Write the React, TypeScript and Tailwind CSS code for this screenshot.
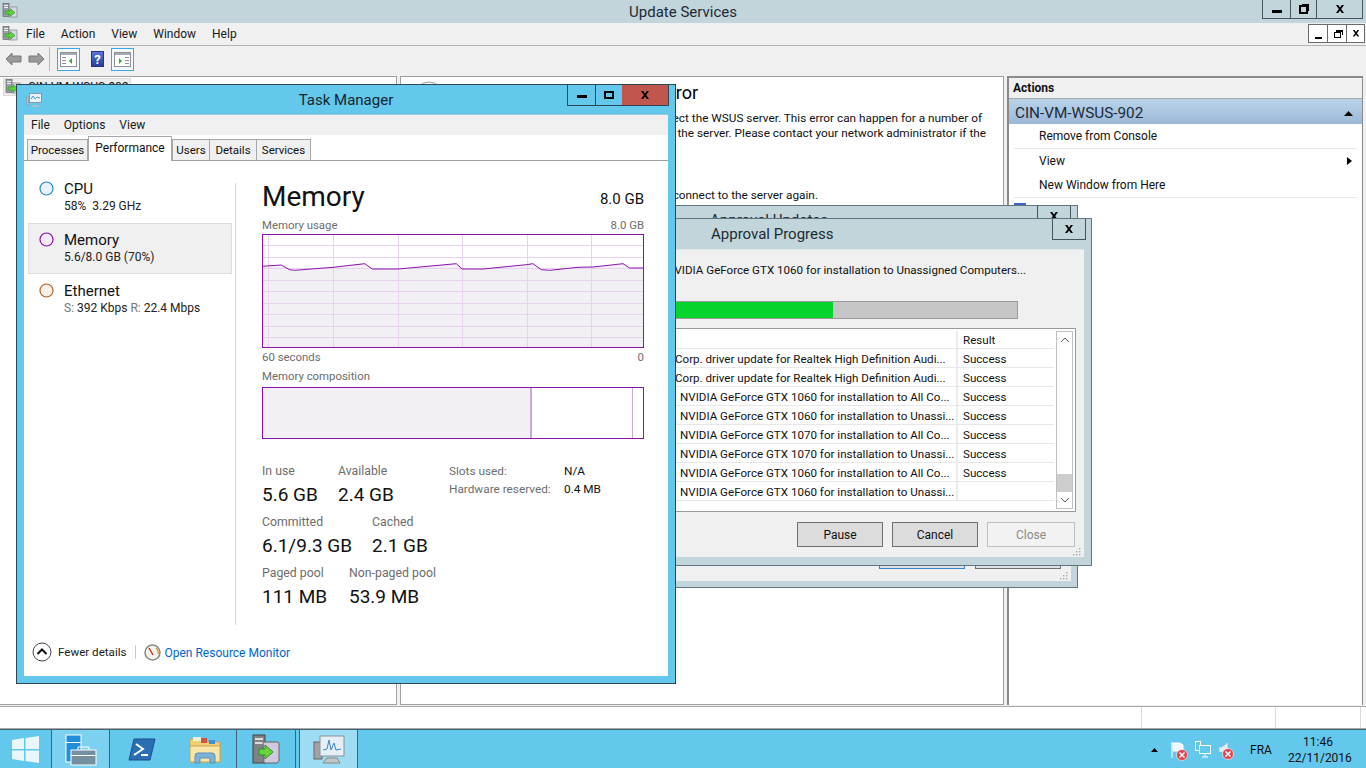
import React from "react";

const ServerIcon = ({ size = 16 }: { size?: number }) => (
  <svg width={size} height={size} viewBox="0 0 16 16">
    <rect x="1" y="0.5" width="6" height="13" fill="#9aa0a8" stroke="#555" strokeWidth="0.6" />
    <rect x="2" y="2" width="4" height="1" fill="#eee" />
    <rect x="2" y="4" width="4" height="1" fill="#eee" />
    <rect x="7" y="4" width="8" height="10" fill="#d8d8e4" stroke="#777" strokeWidth="0.6" />
    <path d="M3 8h5V5.5L13 9.5 8 13.5V11H3z" fill="#5fd03f" stroke="#2d8f22" strokeWidth="0.6" />
  </svg>
);

const MiniMonitor = () => (
  <svg width="16" height="15" viewBox="0 0 16 15">
    <rect x="0.5" y="4" width="2" height="8" fill="#b8c0b0" stroke="#88a" strokeWidth="0.4" />
    <rect x="3.5" y="0.5" width="12" height="9" fill="#e8f2fa" stroke="#8a9aa5" />
    <path d="M5 6l2-3 2 3 2-2 3 1" stroke="#3f88c8" strokeWidth="0.9" fill="none" />
    <path d="M7 12h5l1 2H6z" fill="#b4bcc0" />
  </svg>
);

const Arrow = ({ flip }: { flip?: boolean }) => (
  <svg width="17" height="14" viewBox="0 0 17 14" className={flip ? "-scale-x-100" : ""}>
    <path d="M1 7l6-6v3h9v6H7v3z" fill="#9a9a9a" stroke="#7a7a7a" />
  </svg>
);

const PaneBtn = ({ right }: { right?: boolean }) => (
  <div className="w-[23px] h-[23px] border border-[#3aa7e6] flex items-center justify-center bg-[#f4f8fb]">
    <svg width="17" height="15" viewBox="0 0 17 15">
      <rect x="0.5" y="0.5" width="16" height="14" fill="#fff" stroke="#8d9196" />
      <rect x="1" y="1" width="15" height="2" fill="#a6abb0" />
      {right ? (
        <>
          <rect x="11" y="5" width="4" height="1" fill="#8d9196" />
          <rect x="11" y="8" width="4" height="1" fill="#8d9196" />
          <rect x="11" y="11" width="4" height="1" fill="#8d9196" />
          <path d="M5 6l3 3-3 3z" fill="#2fae3c" />
        </>
      ) : (
        <>
          <rect x="2" y="5" width="4" height="1" fill="#8d9196" />
          <rect x="2" y="8" width="4" height="1" fill="#8d9196" />
          <rect x="2" y="11" width="4" height="1" fill="#8d9196" />
          <path d="M12 6l-3 3 3 3z" fill="#2fae3c" />
        </>
      )}
    </svg>
  </div>
);

const HelpIcon = () => (
  <div className="w-[13px] h-[16px] bg-gradient-to-b from-[#5c74d8] to-[#2c3f9c] border border-[#27348a] flex items-center justify-center text-white font-bold text-[13px] leading-none">
    ?
  </div>
);

const XGlyph = ({ s = 10 }: { s?: number }) => (
  <svg width={s} height={s * 0.8} viewBox="0 0 10 8">
    <path d="M1 0h2.2L5 2.4 6.8 0H9L6.2 4 9 8H6.8L5 5.6 3.2 8H1l2.8-4z" fill="#000" />
  </svg>
);

const NavItem = ({ color, title, sub, active, fill }: { color: string; title: string; sub: React.ReactNode; active?: boolean; fill: string }) => (
  <div className={`h-[51px] flex border pl-[10px] pt-[6px] ${active ? "bg-[#f0f0f0] border-[#dcdcdc]" : "border-transparent"}`}>
    <svg width="15" height="15" viewBox="0 0 15 15" className="mt-[2px] shrink-0">
      <circle cx="7.5" cy="7.5" r="6.5" fill={fill} stroke={color} strokeWidth="1.2" />
    </svg>
    <div className="ml-[10px]">
      <div className="text-[15px] leading-[20px] text-[#111]">{title}</div>
      <div className="text-[12px] leading-[15px] text-[#222] whitespace-nowrap">{sub}</div>
    </div>
  </div>
);

const Stat = ({ label, value, w }: { label: string; value: string; w: string }) => (
  <div className={w}>
    <div className="text-[12.3px] leading-[16px] text-[#6d6d6d] whitespace-nowrap">{label}</div>
    <div className="mt-[2px] text-[19px] leading-[27px] text-[#111] whitespace-nowrap">{value}</div>
  </div>
);

const gx = [6, 71, 136, 200, 265, 329];
const gy = [11, 23, 34, 46, 57, 69, 80, 92, 103];
const pts: [number, number][] = [[37,170],[95,166],[120,180],[135,182],[250,173],[345,162],[368,178],[445,178],[620,162],[637,178],[700,178],[830,165],[850,162],[875,180],[900,182],[985,173],[1030,172],[1120,162],[1140,175],[1180,175]];
const linePts = pts.map(([x, y]) => `${((x - 37) / 3).toFixed(1)},${((y - 73) / 3).toFixed(1)}`).join(" ");

const MemGraph = () => (
  <svg width="382" height="114" viewBox="0 0 382 114" className="block">
    <rect x="0" y="0" width="382" height="114" fill="#fff" />
    <polygon points={`0,113 ${linePts} 382,113`} fill="#f2f0f4" />
    {gx.map((x) => (
      <line key={x} x1={x + 0.5} x2={x + 0.5} y1="0" y2="114" stroke="#e8d3ef" />
    ))}
    {gy.map((y) => (
      <line key={y} y1={y + 0.5} y2={y + 0.5} x1="0" x2="382" stroke="#e8d3ef" />
    ))}
    <polyline points={linePts} fill="none" stroke="#8b12ae" strokeWidth="1" />
    <rect x="0.5" y="0.5" width="381" height="113" fill="none" stroke="#8b12ae" />
  </svg>
);

const rows: [string, string, string][] = [
  ["Corp. driver update for Realtek High Definition Audi...", "Success", "ml-[0px]"],
  ["Corp. driver update for Realtek High Definition Audi...", "Success", "ml-[0px]"],
  ["NVIDIA GeForce GTX 1060 for installation to All Co...", "Success", "ml-[5px]"],
  ["NVIDIA GeForce GTX 1060 for installation to Unassi...", "Success", "ml-[5px]"],
  ["NVIDIA GeForce GTX 1070 for installation to All Co...", "Success", "ml-[5px]"],
  ["NVIDIA GeForce GTX 1070 for installation to Unassi...", "Success", "ml-[5px]"],
  ["NVIDIA GeForce GTX 1060 for installation to All Co...", "Success", "ml-[5px]"],
  ["NVIDIA GeForce GTX 1060 for installation to Unassi...", "", "ml-[5px]"],
];

const Grip = () => (
  <svg width="10" height="10" viewBox="0 0 10 10" className="absolute right-[3px] bottom-[1px]">
    {[[8, 2], [8, 5], [8, 8], [5, 5], [5, 8], [2, 8]].map(([x, y]) => (
      <rect key={`${x}-${y}`} x={x} y={y} width="1.4" height="1.4" fill="#a8a8a8" />
    ))}
  </svg>
);

const TaskBtn = ({ children, w, cls = "" }: { children: React.ReactNode; w: string; cls?: string }) => (
  <div className={`${w} h-full flex items-center justify-center border-r border-[#3f6476] ${cls}`}>{children}</div>
);

const RedX = () => (
  <svg width="12" height="12" viewBox="0 0 12 12" className="absolute right-[-3px] bottom-[-3px]">
    <circle cx="6" cy="6" r="5.500" fill="#e2444d" stroke="#fff" strokeWidth="0.6" />
    <path d="M3.500 3.500l5 5M8.500 3.500l-5 5" stroke="#fff" strokeWidth="1.500" />
  </svg>
);

export default function App() {
  return (
    <div className="relative w-[1366px] h-[768px] overflow-hidden flex flex-col bg-[#f0f0f0] font-['Roboto',sans-serif] text-[12px] text-[#111]">
      {/* title */}
      <div className="relative h-[23px] shrink-0 bg-[#c2d5db] flex items-center justify-center pt-[1px] text-[15px] text-[#1c2b33]">
        <div className="absolute left-[2px] top-[3px]"><ServerIcon /></div>
        Update Services
        <div className="absolute right-[3px] top-0 h-[19px] flex border border-t-0 border-[#45555d]">
          <div className="w-[28px] flex items-center justify-center border-r border-[#45555d]"><div className="w-[10px] h-[3px] mt-[4px] bg-black" /></div>
          <div className="w-[26px] flex items-center justify-center border-r border-[#45555d]">
            <div className="relative w-[9px] h-[9px] border-2 border-black"><div className="absolute -top-[3px] -right-[3px] w-[7px] h-[7px] border-t border-r border-black" /></div>
          </div>
          <div className="w-[45px] flex items-center justify-center"><XGlyph /></div>
        </div>
      </div>
      {/* menu */}
      <div className="relative h-[23px] shrink-0 flex items-center border-b border-[#b4b4b4] bg-[#f0f0f0]">
        <div className="ml-[2px] mr-[8px]"><ServerIcon /></div>
        <div className="flex gap-[16px] text-[#1a1a1a]">
          <span>File</span><span>Action</span><span>View</span><span>Window</span><span>Help</span>
        </div>
        <div className="absolute right-[1px] top-[1px] h-[19px] w-[57px] flex border border-[#6b6b6b] bg-white">
          <div className="w-[19px] flex items-end justify-center pb-[3px] border-r border-[#6b6b6b]"><div className="w-[7px] h-[2px] bg-black" /></div>
          <div className="w-[19px] flex items-center justify-center border-r border-[#6b6b6b]">
            <div className="relative w-[7px] h-[6px] mt-[2px] border border-black"><div className="absolute -top-[3px] -right-[3px] w-[7px] h-[5px] border-t-2 border-r border-black" /></div>
          </div>
          <div className="flex-1 flex items-center justify-center"><XGlyph s={8} /></div>
        </div>
      </div>
      {/* toolbar */}
      <div className="h-[30px] shrink-0 flex items-center pl-[5px] pb-[4px]">
        <Arrow /><div className="w-[6px]" /><Arrow flip />
        <div className="w-px h-[24px] bg-[#b8b8b8] ml-[4px] mr-[7px]" />
        <PaneBtn />
        <div className="ml-[11px] mr-[7px]"><HelpIcon /></div>
        <PaneBtn right />
      </div>
      {/* main */}
      <div className="h-[630px] shrink-0 flex">
        <div className="w-[397px] h-[629px] bg-white border border-l-0 border-[#a0a0a0] pl-[3px] pt-[1px]">
          <div className="w-[128px] h-[18px] bg-[#ececec] border border-[#dcdcdc] flex items-center gap-[7px] pl-[1px] whitespace-nowrap">
            <ServerIcon />CIN-VM-WSUS-902
          </div>
        </div>
        <div className="w-[3px]" />
        <div className="w-[604px] h-[629px] bg-white border border-[#a0a0a0] overflow-hidden whitespace-nowrap">
          <div className="pt-[4px] flex items-start justify-between w-[297px] pl-[12px]">
            <svg width="32" height="32" viewBox="0 0 32 32"><circle cx="16" cy="16" r="15" fill="#fff" stroke="#999" /></svg>
            <span className="text-[18px] leading-[24px] text-black">Error</span>
          </div>
          <div className="-mt-[2px] leading-[15px] text-[11.8px]">
            <div className="w-[581px] text-right">The console cannot connect the WSUS server. This error can happen for a number of</div>
            <div className="w-[585px] text-right">reasons. Check connectivity to the server. Please contact your network administrator if the</div>
            <div className="mt-[47px] w-[417px] text-right">After fixing the problem, try to connect to the server again.</div>
          </div>
        </div>
        <div className="w-[3px]" />
        <div className="w-[356px] h-[629px] bg-white border-t-2 border-l-2 border-r border-[#8a8a8a] flex flex-col">
          <div className="h-[21px] bg-[#f0f0f0] border-b border-[#a8a8a8] pl-[4px] font-bold flex items-center">Actions</div>
          <div className="h-[25px] pt-[3px] bg-gradient-to-b from-[#bad3ea] to-[#9cb8d6] flex items-center justify-between pl-[6px] pr-[9px] text-[15.3px] text-[#1c2b3a]">
            CIN-VM-WSUS-902
            <svg width="9" height="5" viewBox="0 0 9 5"><path d="M0 5l4.5-5L9 5z" fill="#000" /></svg>
          </div>
          <div className="pl-[30px] h-[24px] flex items-center">Remove from Console</div>
          <div className="mx-[5px] h-px bg-[#e8e8e8]" />
          <div className="pl-[30px] pr-[10px] h-[24px] flex items-center justify-between">
            View
            <svg width="5" height="8" viewBox="0 0 5 8"><path d="M0 0l5 4-5 4z" fill="#000" /></svg>
          </div>
          <div className="pl-[30px] h-[24px] flex items-center">New Window from Here</div>
          <div className="mx-[5px] h-px bg-[#e8e8e8]" />
          <div className="ml-[5px] mt-[5px] w-[12px] h-[12px] bg-[#3e62c8]" />
        </div>
      </div>
      {/* status */}
      <div className="h-[23px] shrink-0 bg-white border-b border-t border-[#a8a8a8] flex justify-end pr-[5px]">
        <div className="w-[134px] border-l border-[#dcdcdc]" />
        <div className="w-[86px] border-l border-r border-[#dcdcdc]" />
      </div>
      {/* taskbar */}
      <div className="h-[40px] shrink-0 bg-[#63c8eb] border-t border-[#3f6476] flex items-stretch">
        <TaskBtn w="w-[52px]">
          <svg width="28" height="27" viewBox="0 0 28 27"><path d="M0 4l12-2v11H0zM13.500 2L27 0v13H13.500zM0 14.500h12V25L0 23zM13.500 14.500H27V27l-13.500-2z" fill="#e9f7fc" /></svg>
        </TaskBtn>
        <TaskBtn w="w-[58px]" cls="bg-[#7bd1ef]">
          <svg width="32" height="32" viewBox="0 0 32 32">
            <rect x="1" y="1" width="15" height="27" fill="#1f8fdc" stroke="#fff" />
            <rect x="1" y="8" width="15" height="1" fill="#fff" />
            <rect x="6" y="16" width="25" height="15" fill="#72909f" stroke="#fff" />
            <path d="M13 16v-3h11v3" fill="none" stroke="#fff" />
            <rect x="6" y="21" width="25" height="1" fill="#fff" />
          </svg>
        </TaskBtn>
        <div className="w-[64px] flex items-center justify-center">
          <svg width="28" height="24" viewBox="0 0 28 24">
            <path d="M6 1h21l-5 21H1z" fill="#2a6fb3" stroke="#1e4f8a" />
            <path d="M8 6l7 5-9 6" fill="none" stroke="#fff" strokeWidth="2" />
            <rect x="13" y="16" width="7" height="2" fill="#fff" />
          </svg>
        </div>
        <TaskBtn w="w-[63px]">
          <svg width="32" height="28" viewBox="0 0 32 28">
            <path d="M1 3h13l2 3h15v20H1z" fill="#f1cf72" stroke="#c9a552" />
            <rect x="4" y="1" width="8" height="4" fill="#e7f2d8" />
            <rect x="12" y="2" width="6" height="5" fill="#d5513f" />
            <rect x="20" y="4" width="6" height="4" fill="#3f8fd5" />
            <path d="M1 10h30v16H1z" fill="#f8e6a8" stroke="#c9a552" />
            <path d="M6 27v-7q0-3 3-3h14q3 0 3 3v7h-5v-5H11v5z" fill="#7fb2d8" stroke="#5c8fb8" />
          </svg>
        </TaskBtn>
        <TaskBtn w="w-[59px]">
          <svg width="30" height="31" viewBox="0 0 30 31">
            <rect x="2" y="1" width="12" height="28" fill="#7f8386" stroke="#444" />
            <rect x="4" y="4" width="8" height="2" fill="#ddd" />
            <rect x="4" y="8" width="8" height="2" fill="#ddd" />
            <path d="M12 8h14q2 0 2 2v17l-2 2H13z" fill="#cfc9e0" stroke="#666" />
            <path d="M8 15h6v-4l8 7-8 7v-4H8z" fill="#66d43f" stroke="#2d8f22" />
          </svg>
        </TaskBtn>
        <div className="w-[3px]" />
        <div className="w-[59px] flex items-center justify-center bg-[#9edcf3] border-l border-r border-[#3f6476]">
          <svg width="32" height="30" viewBox="0 0 32 30">
            <rect x="1" y="7" width="8" height="17" fill="#a0a4a8" stroke="#666" />
            <rect x="7" y="1" width="24" height="20" fill="#e6eff6" stroke="#8a9299" />
            <path d="M10 15l4-1 2-9 2 10 3-7 2 7 5-1" fill="none" stroke="#3a88cc" />
            <path d="M14 23h10l3 5H10z" fill="#c2c6c9" stroke="#888" />
          </svg>
        </div>
        <div className="flex-1 flex items-center justify-end">
          <svg width="7" height="4" viewBox="0 0 7 4" className="mr-[13px]"><path d="M0 4l3.500-4L7 4z" fill="#000" /></svg>
          <div className="relative w-[14px] h-[16px] mr-[10px]">
            <svg width="14" height="16" viewBox="0 0 14 16"><path d="M1 0v16M2 1h7l3 2v6H2z" fill="#eef8fc" stroke="#fff" /></svg>
            <RedX />
          </div>
          <svg width="16" height="17" viewBox="0 0 16 17" className="mr-[8px]">
            <rect x="0.500" y="0.500" width="5" height="9" fill="none" stroke="#fff" />
            <rect x="4.500" y="4.500" width="11" height="8" fill="#63c8eb" stroke="#fff" />
            <path d="M7 16h6M10 12v4" stroke="#fff" />
          </svg>
          <div className="relative w-[12px] h-[15px] mr-[19px]">
            <svg width="12" height="15" viewBox="0 0 12 15"><path d="M0 5h3l6-5v15L3 10H0z" fill="#e3eef3" stroke="#8aa" strokeWidth="0.5" /></svg>
            <RedX />
          </div>
          <span className="text-[12px] w-[26px] mr-[12px] text-[#111]">FRA</span>
          <div className="w-[60px] mr-[18px] text-center leading-[16px] text-[12px] text-[#111]">
            <div>11:46</div>
            <div>22/11/2016</div>
          </div>
        </div>
      </div>

      {/* back dialog */}
      <div className="absolute left-[450px] top-[205px] w-[628px] h-[383px] bg-[#c2d5db] border border-[#5f7680]">
        <div className="pl-[259px] pt-[4px] text-[15px] leading-[20px] text-[#1c2b33]">Approval Updates</div>
        <div className="absolute right-[6px] top-0 w-[34px] h-[20px] border border-t-0 border-[#45555d] flex items-center justify-center"><XGlyph /></div>
        <div className="absolute left-[6px] right-[6px] top-[30px] bottom-[6px] bg-[#f0f0f0]">
          <div className="absolute left-[422px] bottom-[12px] w-[86px] h-[25px] border border-[#3a84c4] bg-[#e1e1e1]" />
          <div className="absolute left-[518px] bottom-[12px] w-[86px] h-[25px] border border-[#707070] bg-[#e1e1e1]" />
          <Grip />
        </div>
      </div>

      {/* front dialog */}
      <div className="absolute left-[450px] top-[218px] w-[642px] h-[348px] bg-[#c2d5db] border border-[#5f7680] flex flex-col">
        <div className="h-[30px] shrink-0 pl-[260px] pt-[5px] text-[15px] leading-[20px] text-[#1c2b33] relative">
          Approval Progress
          <div className="absolute right-[5px] top-0 w-[34px] h-[21px] border border-t-0 border-[#45555d] flex items-center justify-center"><XGlyph /></div>
        </div>
        <div className="relative mx-[7px] mb-[8px] flex-1 bg-[#f0f0f0] border-t border-[#dde7ea] flex flex-col whitespace-nowrap">
          <div className="pl-[153px] pt-[12px] h-[51px] shrink-0 leading-[16px] text-[11.6px] overflow-hidden">Approving NVIDIA GeForce GTX 1060 for installation to Unassigned Computers...</div>
          <div className="w-[560px] h-[18px] shrink-0 bg-[#c6c6c6] border border-[#9a9a9a] border-l-0">
            <div className="w-[375px] h-full bg-[#06d42c]" />
          </div>
          <div className="mt-[9px] w-[618px] h-[184px] shrink-0 bg-white border border-[#9a9a9a] p-[2px] flex">
            <div className="w-[596px]">
              <div className="h-[18px] flex border-b border-[#e8e8e8]">
                <div className="w-[497px] border-r-2 border-[#ececec]" />
                <div className="pl-[5px] leading-[18px] text-[11.6px]">Result</div>
              </div>
              {rows.map(([t, r, m], i) => (
                <div key={i} className="h-[19px] flex border-b border-[#e8e8e8] leading-[20px] text-[11.6px]">
                  <div className="w-[497px] border-r-2 border-[#ececec] pl-[214px] overflow-hidden"><div className={m}>{t}</div></div>
                  <div className="pl-[5px]">{r}</div>
                </div>
              ))}
            </div>
            <div className="w-[17px] ml-[2px] border border-[#c0c0c0] flex flex-col justify-between items-center">
              <svg width="10" height="16" viewBox="0 0 10 16"><path d="M1 10l4-4 4 4" fill="none" stroke="#666" /></svg>
              <div className="flex-1" />
              <div className="w-full h-[18px] bg-[#cdcdcd]" />
              <svg width="10" height="16" viewBox="0 0 10 16"><path d="M1 6l4 4 4-4" fill="none" stroke="#666" /></svg>
            </div>
          </div>
          <div className="flex justify-end gap-[9px] pr-[9px] mt-[10px]">
            <div className="w-[86px] h-[25px] bg-[#dcdcdc] border border-[#707070] flex items-center justify-center">Pause</div>
            <div className="w-[86px] h-[25px] bg-[#dcdcdc] border border-[#707070] flex items-center justify-center">Cancel</div>
            <div className="w-[88px] h-[25px] bg-[#f2f2f2] border border-[#bfbfbf] text-[#8a8a8a] flex items-center justify-center">Close</div>
          </div>
          <Grip />
        </div>
      </div>

      {/* task manager */}
      <div className="absolute left-[16px] top-[84px] w-[660px] h-[600px] bg-[#63c8eb] border border-[#2c4653] flex flex-col pb-[7px] px-[7px]">
        <div className="relative h-[29px] shrink-0 flex items-center justify-center pt-[1px] text-[15px] text-[#15262e]">
          <div className="absolute left-[2px] top-[8px]"><MiniMonitor /></div>
          Task Manager
          <div className="absolute right-[-1px] top-0 h-[21px] flex border border-t-0 border-[#2c4653]">
            <div className="w-[28px] flex items-center justify-center border-r border-[#2c4653]"><div className="w-[10px] h-[3px] mt-[3px] bg-black" /></div>
            <div className="w-[26px] flex items-center justify-center"><div className="w-[10px] h-[8px] border-2 border-black" /></div>
            <div className="w-[46px] bg-[#c0574f] flex items-center justify-center"><XGlyph /></div>
          </div>
        </div>
        <div className="flex-1 bg-white border-t border-[#9cc9dc] flex flex-col">
          <div className="h-[20px] shrink-0 bg-[#f0f0f0] flex items-center pl-[7px] gap-[14px] text-[#1a1a1a]">
            <span>File</span><span>Options</span><span>View</span>
          </div>
          <div className="h-[26px] shrink-0 flex items-end pl-[3px] border-b border-[#a0a0a0] text-[11.5px]">
            <div className="h-[21px] w-[61px] pt-[1px] bg-[#f0f0f0] border border-b-0 border-[#a8a8a8] flex items-center justify-center">Processes</div>
            <div className="relative z-10 -mb-px h-[25px] w-[84px] bg-white border border-b-0 border-[#a8a8a8] flex items-start pt-[2px] justify-center text-[12px]">Performance</div>
            <div className="h-[21px] w-[38px] pt-[1px] bg-[#f0f0f0] border border-b-0 border-[#a8a8a8] flex items-center justify-center">Users</div>
            <div className="h-[21px] w-[47px] pt-[1px] bg-[#f0f0f0] border border-b-0 border-l-0 border-[#a8a8a8] flex items-center justify-center">Details</div>
            <div className="h-[21px] w-[54px] pt-[1px] bg-[#f0f0f0] border border-b-0 border-l-0 border-[#a8a8a8] flex items-center justify-center">Services</div>
          </div>
          <div className="flex-1 flex flex-col pl-[4px]">
            <div className="flex h-[464px]">
              <div className="w-[204px] pt-[11px]">
                <NavItem color="#2b86c0" fill="#e8f2fa" title="CPU" sub={<span>58%&nbsp; 3.29 GHz</span>} />
                <NavItem active color="#8b12ae" fill="#f6ecf9" title="Memory" sub="5.6/8.0 GB (70%)" />
                <NavItem color="#b0622b" fill="#faf0e8" title="Ethernet" sub={<span><span className="text-[#777]">S:</span> 392 Kbps <span className="text-[#777]">R:</span> 22.4 Mbps</span>} />
              </div>
              <div className="mt-[22px] ml-[3px] w-px bg-[#d8d8d8] h-[442px]" />
              <div className="ml-[26px] w-[382px] pt-[17px]">
                <div className="flex justify-between items-end h-[37px]">
                  <span className="text-[28px] leading-[37px] text-[#111]">Memory</span>
                  <span className="text-[15px] leading-[20px] mb-[6px]">8.0 GB</span>
                </div>
                <div className="flex justify-between h-[16px] mt-[3px] leading-[14px] text-[#6d6d6d] text-[11.4px]">
                  <span>Memory usage</span><span>8.0 GB</span>
                </div>
                <MemGraph />
                <div className="flex justify-between leading-[18px] h-[18px] text-[#6d6d6d] text-[11.4px]">
                  <span>60 seconds</span><span>0</span>
                </div>
                <div className="mt-[2px] leading-[16px] h-[19px] text-[#6d6d6d] text-[11.4px]">Memory composition</div>
                <div className="h-[52px] border border-[#8b12ae] flex">
                  <div className="w-[269px] bg-[#f2f0f4] border-r-2 border-[#c9a9d6]" />
                  <div className="w-[101px] border-r border-[#c9a9d6]" />
                </div>
                <div className="flex mt-[24px]">
                  <div className="w-[187px]">
                    <div className="flex"><Stat w="w-[76px]" label="In use" value="5.6 GB" /><Stat w="" label="Available" value="2.4 GB" /></div>
                    <div className="flex mt-[6px]"><Stat w="w-[110px]" label="Committed" value="6.1/9.3 GB" /><Stat w="" label="Cached" value="2.1 GB" /></div>
                    <div className="flex mt-[6px]"><Stat w="w-[87px]" label="Paged pool" value="111 MB" /><Stat w="" label="Non-paged pool" value="53.9 MB" /></div>
                  </div>
                  <div className="flex gap-[14px] leading-[18px] -mt-[1px] text-[11.8px]">
                    <div className="w-[101px] text-[#6d6d6d] whitespace-nowrap"><div>Slots used:</div><div>Hardware reserved:</div></div>
                    <div className="text-[#111]"><div>N/A</div><div>0.4 MB</div></div>
                  </div>
                </div>
              </div>
            </div>
            <div className="flex items-center h-[20px] mt-[17px]">
              <svg width="20" height="20" viewBox="0 0 20 20" className="ml-[4px]">
                <circle cx="10" cy="10" r="9" fill="#fff" stroke="#444" />
                <path d="M5.500 12l4.500-4.500 4.500 4.500" fill="none" stroke="#111" strokeWidth="2" />
              </svg>
              <span className="ml-[6px] pt-[1px] text-[#1a1a1a] text-[11.6px]">Fewer details</span>
              <div className="w-px h-[14px] bg-[#c8c8c8] mx-[8px]" />
              <svg width="17" height="17" viewBox="0 0 17 17">
                <circle cx="8.500" cy="8.500" r="7.500" fill="#f6f2ec" stroke="#8a8a84" strokeWidth="1.500" />
                <path d="M12 4a6 6 0 0 1 2 6" fill="none" stroke="#e08a3c" strokeWidth="1.200" />
                <path d="M5 4l4 7" stroke="#c8342c" strokeWidth="1.500" />
              </svg>
              <span className="ml-[4px] pt-[1px] text-[#0066cc]">Open Resource Monitor</span>
            </div>
          </div>
        </div>
      </div>
    </div>
  );
}
